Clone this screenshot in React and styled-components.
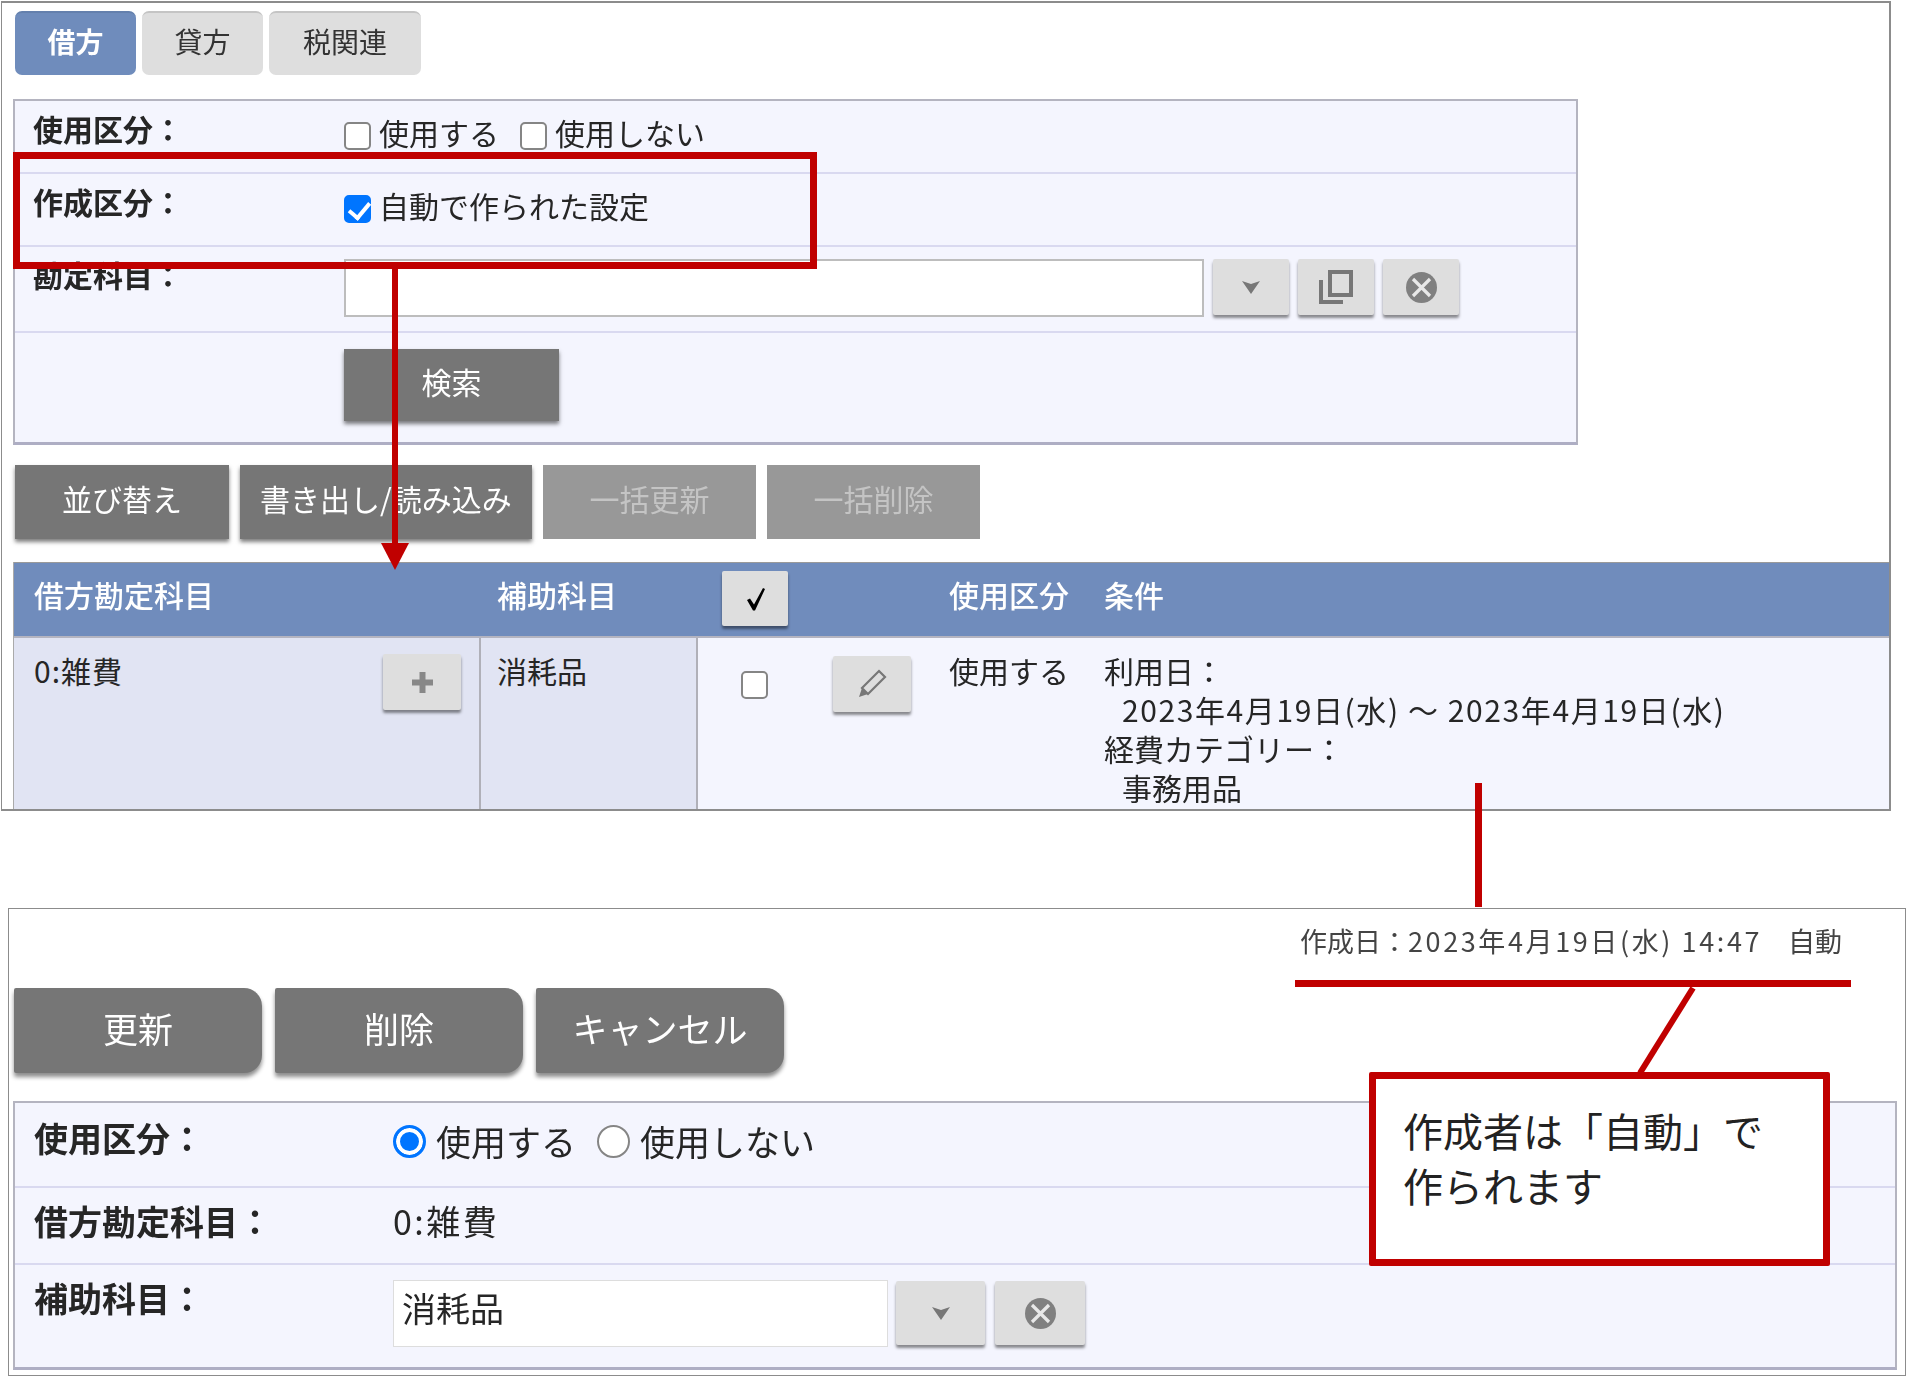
import React from 'react';
import styled, { createGlobalStyle } from 'styled-components';

const GlobalStyle = createGlobalStyle`
  html, body {
    margin: 0;
    padding: 0;
    background: #fff;
  }
  * {
    box-sizing: border-box;
  }
`;

const Page = styled.div`
  position: relative;
  display: flex;
  flex-direction: column;
  width: 1907px;
  height: 1378px;
  overflow: hidden;
  background: #fff;
  font-family: "Noto Sans CJK JP", "Liberation Sans", sans-serif;
  color: #262626;
`;

const ListFrame = styled.section`
  display: flex;
  flex-direction: column;
  width: 1890px;
  height: 810px;
  margin: 1px 0 0 1px;
  padding-top: 8px;
  border: 1px solid #8c8c8c;
  border-width: 2px 2px 2px 1px;
  overflow: hidden;
  filter: blur(0.45px);
`;

const Tabs = styled.div`
  display: flex;
  gap: 6px;
  margin-left: 13px;
`;

const Tab = styled.div`
  display: flex;
  align-items: center;
  justify-content: center;
  width: ${props => props.$width}px;
  height: 64px;
  padding-bottom: 7px;
  border-radius: 7px;
  border-top: 2px solid ${props => props.$active ? '#6480ad' : '#c4c4c4'};
  background: ${props => props.$active ? '#6f8cbc' : '#dedede'};
  color: ${props => props.$active ? '#fff' : '#333'};
  font-size: 28px;
  font-weight: ${props => props.$active ? 700 : 400};
`;

const FormPanel = styled.div`
  border: 2px solid #b4b4c0;
  border-bottom: 3px solid #aeaec4;
  background: #f4f5fe;
`;

const SearchPanel = styled(FormPanel)`
  width: 1565px;
  margin: 24px 0 0 11px;
`;

const FormRow = styled.div`
  display: grid;
  grid-template-columns: 329px 1fr;
  height: ${props => props.$height}px;
  border-bottom: 2px solid #d9d9f0;
`;

const Label = styled.div`
  padding: 7px 0 0 18px;
  font-size: 30px;
  font-weight: 700;
  line-height: 40px;
`;

const Choices = styled.div`
  display: flex;
  align-items: center;
  padding-bottom: 10px;
  font-size: 30px;
  line-height: 40px;
`;

const Check = styled.input.attrs({ type: 'checkbox' })`
  appearance: none;
  position: relative;
  flex: none;
  width: 27px;
  height: 28px;
  margin: ${props => props.$margin || 0};
  border: 2px solid #858585;
  border-radius: 5px;
  background: #fff;

  &:checked {
    border-color: #0075ff;
    background: #0075ff;
  }
  &:checked::after {
    content: '';
    position: absolute;
    top: 1px;
    left: 7px;
    width: 9px;
    height: 17px;
    border: solid #fff;
    border-width: 0 4px 4px 0;
    transform: rotate(40deg);
  }
`;

const Choice = styled.label`
  display: flex;
  align-items: center;
  gap: 8px;
  margin-right: 21px;

  ${Check} {
    margin-top: 8px;
  }
`;

const FieldGroup = styled.div`
  display: flex;
  align-items: flex-start;
  gap: 9px;
  padding-top: 12px;
`;

const TextField = styled.div`
  width: 860px;
  height: 58px;
  border: 2px solid #bdbdbd;
  background: #fff;
`;

const IconButton = styled.div`
  flex: none;
  display: flex;
  align-items: center;
  justify-content: center;
  width: ${props => props.$width || 76}px;
  height: ${props => props.$height || 56}px;
  margin: ${props => props.$margin || 0};
  border-radius: 2px;
  background: #dedede;
  box-shadow: 0 3px 3px rgba(0, 0, 0, 0.45);
`;

const GrayButton = styled.div`
  display: flex;
  align-items: center;
  justify-content: center;
  width: ${props => props.$width}px;
  height: ${props => props.$height}px;
  padding-bottom: 8px;
  background: ${props => props.$disabled ? '#989898' : '#767676'};
  box-shadow: ${props => props.$disabled ? 'none' : '0 3px 4px rgba(0, 0, 0, 0.5)'};
  color: ${props => props.$disabled ? '#c4c4c4' : '#fff'};
  font-size: 30px;
  white-space: nowrap;
`;

const SearchRow = styled.div`
  height: 109px;
  padding: 16px 0 0 329px;
`;

const ActionBar = styled.div`
  display: flex;
  gap: 11px;
  margin: 20px 0 0 13px;
`;

const ResultTable = styled.div`
  flex: 1;
  min-height: 0;
  display: flex;
  flex-direction: column;
  margin: 23px 0 0 11px;
  border-left: 1px solid #aaa;
`;

const Columns = styled.div`
  display: grid;
  grid-template-columns: 467px 217px 235px 155px 1fr;
`;

const HeadRow = styled(Columns)`
  height: 76px;
  border-top: 1px solid #9a9a9a;
  border-bottom: 2px solid #b4b4c0;
  background: #708cbc;
  color: #fff;
  font-size: 30px;
  font-weight: 500;
  line-height: 62px;
`;

const HeadCell = styled.div`
  display: flex;
  align-items: ${props => props.$center ? 'flex-start' : 'stretch'};
  padding: ${props => props.$center ? '8px 0 0 24px' : '0 0 0 ' + (props.$pad || 16) + 'px'};
`;

const BodyRow = styled(Columns)`
  flex: 1;
  min-height: 0;
  overflow: hidden;
  background: #f4f5fe;
  font-size: 30px;
  line-height: 39px;
`;

const AccountCell = styled.div`
  display: flex;
  justify-content: space-between;
  align-items: flex-start;
  padding: 13px 18px 0 ${props => props.$pad}px;
  border-right: 2px solid #b0b0b8;
  background: #e1e4f3;
`;

const AccountName = styled.span`
  letter-spacing: ${props => props.$spacing}px;
`;

const ToolCell = styled.div`
  display: flex;
  align-items: flex-start;
  padding-top: 18px;
`;

const TextCell = styled.div`
  padding: 13px 0 0 16px;
  white-space: nowrap;
`;

const Indented = styled.div`
  padding-left: 18px;
`;

const DateRange = styled(Indented)`
  letter-spacing: 1.6px;
`;

const EntryFrame = styled.section`
  width: 1898px;
  height: 468px;
  margin: 97px 0 0 8px;
  border: 1px solid #8c8c8c;
  overflow: hidden;
  filter: blur(0.45px);
`;

const MetaLine = styled.div`
  padding: 12px 63px 0 0;
  color: #444;
  font-size: 27px;
  line-height: 40px;
  text-align: right;
  white-space: pre;
`;

const MetaDate = styled.span`
  letter-spacing: 2.6px;
`;

const EntryButtons = styled.div`
  display: flex;
  gap: 13px;
  margin: 27px 0 0 5px;
`;

const EntryButton = styled.div`
  display: flex;
  align-items: center;
  justify-content: center;
  width: 248px;
  height: 85px;
  padding-bottom: 7px;
  border-radius: 2px 18px 18px 2px;
  background: #767676;
  box-shadow: 0 4px 4px rgba(0, 0, 0, 0.45);
  color: #fff;
  font-size: 35px;
`;

const EntryPanel = styled(FormPanel)`
  width: 1884px;
  height: 269px;
  margin: 28px 0 0 4px;
`;

const EntryRow = styled.div`
  display: grid;
  grid-template-columns: 378px 1fr;
  height: ${props => props.$height}px;
  border-bottom: ${props => props.$last ? 'none' : '2px solid #d9d9f0'};
  font-size: 34px;
  line-height: 44px;
`;

const EntryLabel = styled.div`
  padding: ${props => props.$top}px 0 0 19px;
  font-weight: 700;
`;

const EntryValue = styled.div`
  padding-top: ${props => props.$top}px;
`;

const EntryChoices = styled.div`
  display: flex;
  align-items: center;
  font-size: 35px;
`;

const EntryChoice = styled.label`
  display: flex;
  align-items: center;
  gap: 10px;
  margin-right: 21px;
`;

const Radio = styled.input.attrs({ type: 'radio', name: 'use' })`
  appearance: none;
  flex: none;
  width: 33px;
  height: 33px;
  margin: 0;
  border: 2px solid #858585;
  border-radius: 50%;
  background: #fff;

  &:checked {
    border: 3px solid #0075ff;
    background: #0075ff;
    box-shadow: inset 0 0 0 4px #fff;
  }
`;

const EntryField = styled.div`
  flex: none;
  width: 495px;
  height: 67px;
  padding-left: 8px;
  border: 1px solid #ddd;
  background: #fff;
  line-height: 54px;
`;

const EntryFieldGroup = styled.div`
  display: flex;
  align-items: flex-start;
  gap: 8px;
  padding-top: 15px;
`;

const AnnotationLayer = styled.svg`
  position: absolute;
  top: 0;
  left: 0;
  pointer-events: none;
`;

const Callout = styled.div`
  position: absolute;
  top: 1072px;
  left: 1369px;
  width: 461px;
  height: 194px;
  padding: 24px 0 0 27px;
  border: 7px solid #c00000;
  border-radius: 2px;
  background: #fff;
  color: #222;
  font-size: 40px;
  line-height: 55px;
  white-space: pre;
`;

const ChevronIcon = () => (
  <svg width="18" height="13" viewBox="0 0 18 13">
    <polygon points="0,0 9,3 18,0 9,13" fill="#777" />
  </svg>
);

const CopyIcon = () => (
  <svg width="34" height="34" viewBox="0 0 34 34" fill="none" stroke="#777" strokeWidth="4">
    <rect x="11" y="2" width="21" height="23" />
    <path d="M2 10v22h22" />
  </svg>
);

const ClearIcon = () => (
  <svg width="31" height="31" viewBox="0 0 31 31">
    <circle cx="15.500" cy="15.500" r="15.500" fill="#808080" />
    <path d="M7 7l17 17M24 7L7 24" stroke="#e8e8e8" strokeWidth="3.200" />
  </svg>
);

const PlusIcon = () => (
  <svg width="23" height="23" viewBox="0 0 23 23">
    <path d="M11.500 1v21M1 11.500h21" stroke="#888" strokeWidth="6" />
  </svg>
);

const PencilIcon = () => (
  <svg width="30" height="30" viewBox="0 0 30 30">
    <path d="M22 2l6 6L11 25l-6-6z" fill="none" stroke="#777" strokeWidth="2.200" />
    <path d="M5 19l6 6-9 3z" fill="#777" />
  </svg>
);

const TickIcon = () => (
  <svg width="23" height="24" viewBox="0 0 23 24">
    <path d="M3 13l3-1.500 4 6L19 1l2 1L11 23.500H9z" fill="#000" />
  </svg>
);

const App = () => (
  <Page>
    <GlobalStyle />

    <ListFrame>
      <Tabs>
        <Tab $width={121} $active>借方</Tab>
        <Tab $width={121}>貸方</Tab>
        <Tab $width={152}>税関連</Tab>
      </Tabs>

      <SearchPanel>
        <FormRow $height={73}>
          <Label>使用区分：</Label>
          <Choices>
            <Choice><Check />使用する</Choice>
            <Choice><Check />使用しない</Choice>
          </Choices>
        </FormRow>
        <FormRow $height={73}>
          <Label>作成区分：</Label>
          <Choices>
            <Choice><Check defaultChecked />自動で作られた設定</Choice>
          </Choices>
        </FormRow>
        <FormRow $height={86}>
          <Label>勘定科目：</Label>
          <FieldGroup>
            <TextField />
            <IconButton><ChevronIcon /></IconButton>
            <IconButton><CopyIcon /></IconButton>
            <IconButton><ClearIcon /></IconButton>
          </FieldGroup>
        </FormRow>
        <SearchRow>
          <GrayButton $width={215} $height={72}>検索</GrayButton>
        </SearchRow>
      </SearchPanel>

      <ActionBar>
        <GrayButton $width={214} $height={74}>並び替え</GrayButton>
        <GrayButton $width={292} $height={74}>書き出し/読み込み</GrayButton>
        <GrayButton $width={213} $height={74} $disabled>一括更新</GrayButton>
        <GrayButton $width={213} $height={74} $disabled>一括削除</GrayButton>
      </ActionBar>

      <ResultTable>
        <HeadRow>
          <HeadCell $pad={20}>借方勘定科目</HeadCell>
          <HeadCell>補助科目</HeadCell>
          <HeadCell $center>
            <IconButton $width={66} $height={55}><TickIcon /></IconButton>
          </HeadCell>
          <HeadCell>使用区分</HeadCell>
          <HeadCell>条件</HeadCell>
        </HeadRow>
        <BodyRow>
          <AccountCell $pad={20}>
            <AccountName $spacing={1}>0:雑費</AccountName>
            <IconButton $width={78} $margin="3px 0 0"><PlusIcon /></IconButton>
          </AccountCell>
          <AccountCell $pad={16}>消耗品</AccountCell>
          <ToolCell>
            <Check $margin="15px 0 0 43px" />
            <IconButton $width={78} $margin="0 0 0 65px"><PencilIcon /></IconButton>
          </ToolCell>
          <TextCell>使用する</TextCell>
          <TextCell>
            利用日：
            <DateRange>2023年4月19日(水) ～ 2023年4月19日(水)</DateRange>
            経費カテゴリー：
            <Indented>事務用品</Indented>
          </TextCell>
        </BodyRow>
      </ResultTable>
    </ListFrame>

    <EntryFrame>
      <MetaLine>作成日：<MetaDate>2023年4月19日(水) 14:47   </MetaDate>自動</MetaLine>
      <EntryButtons>
        <EntryButton>更新</EntryButton>
        <EntryButton>削除</EntryButton>
        <EntryButton>キャンセル</EntryButton>
      </EntryButtons>

      <EntryPanel>
        <EntryRow $height={85}>
          <EntryLabel $top={13}>使用区分：</EntryLabel>
          <EntryValue $top={16}>
            <EntryChoices>
              <EntryChoice><Radio defaultChecked />使用する</EntryChoice>
              <EntryChoice><Radio />使用しない</EntryChoice>
            </EntryChoices>
          </EntryValue>
        </EntryRow>
        <EntryRow $height={77}>
          <EntryLabel $top={11}>借方勘定科目：</EntryLabel>
          <EntryValue $top={11}><AccountName $spacing={2.5}>0:雑費</AccountName></EntryValue>
        </EntryRow>
        <EntryRow $height={103} $last>
          <EntryLabel $top={11}>補助科目：</EntryLabel>
          <EntryFieldGroup>
            <EntryField>消耗品</EntryField>
            <IconButton $width={89} $height={64} $margin="1px 0 0"><ChevronIcon /></IconButton>
            <IconButton $width={90} $height={64} $margin="1px 0 0 2px"><ClearIcon /></IconButton>
          </EntryFieldGroup>
        </EntryRow>
      </EntryPanel>
    </EntryFrame>

    <AnnotationLayer width="1907" height="1378" viewBox="0 0 1907 1378">
      <rect x="16.500" y="155.500" width="797" height="110" fill="none" stroke="#c00000" strokeWidth="7" />
      <path d="M395 262V546" stroke="#c00000" strokeWidth="6" />
      <polygon points="381,543 409,543 395,570" fill="#c00000" />
      <path d="M1478.500 783V907" stroke="#c00000" strokeWidth="7" />
      <path d="M1295 983.500H1851" stroke="#c00000" strokeWidth="7" />
      <path d="M1693 988L1640 1073" stroke="#c00000" strokeWidth="6" />
    </AnnotationLayer>

    <Callout>{'作成者は「自動」で\n作られます'}</Callout>
  </Page>
);

export default App;
